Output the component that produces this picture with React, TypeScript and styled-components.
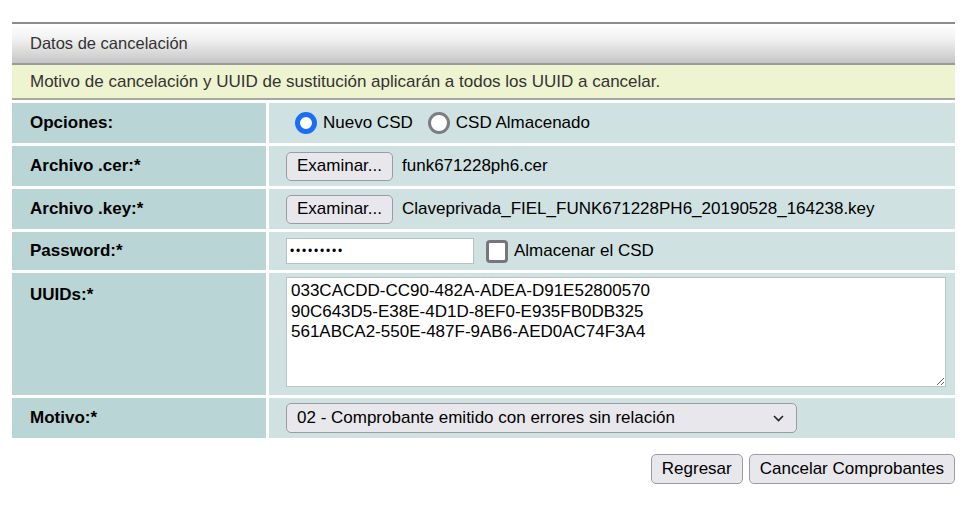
import React from "react";
import styled, { createGlobalStyle } from "styled-components";

const Global = createGlobalStyle`
  html, body { margin: 0; padding: 0; background: #fff; }
  body { font-family: "Liberation Sans", Arial, sans-serif; color: #000; }
`;

const Page = styled.div`
  width: 968px;
  height: 508px;
  padding: 22px 13px 0 12px;
  box-sizing: border-box;
`;

const Panel = styled.section`
  display: flex;
  flex-direction: column;
`;

const PanelHeader = styled.div`
  height: 39px;
  border-top: 2px solid #8c8c8c;
  border-bottom: 2px solid #9a9a9a;
  background: linear-gradient(#ffffff, #f0f0f0 40%, #c6c6c8);
  display: flex;
  align-items: center;
  padding-left: 18px;
  font-size: 16.5px;
  color: #333;
`;

const Notice = styled.div`
  height: 33px;
  background: #eef4cf;
  border-bottom: 2px solid #a6a6a6;
  display: flex;
  align-items: center;
  padding-left: 18px;
  font-size: 17px;
  color: #333;
`;

const FormGrid = styled.div`
  display: grid;
  grid-template-columns: 254px 1fr;
  gap: 3px;
  margin-top: 3px;
`;

const Label = styled.div<{ $h: number }>`
  background: #b9d5d5;
  height: ${(p) => p.$h}px;
  display: flex;
  align-items: ${(p) => (p.$h > 60 ? "flex-start" : "center")};
  padding: ${(p) => (p.$h > 60 ? "12px" : "0")} 0 0 18px;
  box-sizing: border-box;
  font-weight: bold;
  font-size: 17px;
`;

const Value = styled.div<{ $h: number }>`
  background: #d0e1e1;
  height: ${(p) => p.$h}px;
  display: flex;
  align-items: center;
  padding-left: 17px;
  box-sizing: border-box;
  font-size: 17px;
  gap: 9px;
`;

const RadioGroup = styled.label<{ $first?: boolean }>`
  display: flex;
  align-items: center;
  gap: 6px;
  margin-left: ${(p) => (p.$first ? "9px" : "6px")};
`;

const RadioDot = styled.span<{ $on?: boolean }>`
  width: 22px;
  height: 22px;
  border-radius: 50%;
  box-sizing: border-box;
  background: #fff;
  border: ${(p) => (p.$on ? "5.5px solid #1a6ef5" : "3px solid #7c7c84")};
`;

const FileButton = styled.button`
  font-family: "Liberation Sans", Arial, sans-serif;
  font-size: 17px;
  height: 29px;
  width: 107px;
  padding: 0;
  background: #e8e7ec;
  border: 1px solid #9b9ba3;
  border-radius: 5px;
  color: #000;
`;

const FileName = styled.span`
  font-size: 17px;
`;

const PasswordInput = styled.input`
  width: 188px;
  height: 26px;
  box-sizing: border-box;
  border: 1px solid #b5c2c2;
  background: #fff;
  font-size: 12px;
  padding: 0 3px;
  letter-spacing: 1.8px;
`;

const Check = styled.span`
  width: 22px;
  height: 23px;
  box-sizing: border-box;
  border: 3px solid #76767e;
  border-radius: 4px;
  background: #fff;
  margin-left: 3px;
  margin-right: -3px;
`;

const TextArea = styled.textarea`
  width: 660px;
  height: 110px;
  box-sizing: border-box;
  border: 1px solid #b8c4c4;
  background: #fff;
  font-family: "Liberation Sans", Arial, sans-serif;
  font-size: 17px;
  line-height: 20.5px;
  padding: 3px 4px;
  resize: both;
  color: #000;
`;

const UuidCell = styled(Value)`
  align-items: flex-start;
  padding-top: 4px;
`;

const SelectBox = styled.div`
  width: 511px;
  height: 30px;
  box-sizing: border-box;
  background: #e8e7ec;
  border: 1px solid #9b9ba3;
  border-radius: 5px;
  display: flex;
  align-items: center;
  justify-content: space-between;
  padding: 0 12px 0 10px;
  font-size: 17px;
`;

const Actions = styled.div`
  display: flex;
  justify-content: flex-end;
  gap: 6px;
  margin-top: 16px;
`;

const ActionButton = styled.button`
  font-family: "Liberation Sans", Arial, sans-serif;
  font-size: 17px;
  height: 30px;
  padding: 0 10px;
  background: #e8e7ec;
  border: 1px solid #9b9ba3;
  border-radius: 5px;
  color: #000;
`;

export default function App() {
  return (
    <Page>
      <Global />
      <Panel>
        <PanelHeader>Datos de cancelación</PanelHeader>
        <Notice>Motivo de cancelación y UUID de sustitución aplicarán a todos los UUID a cancelar.</Notice>
        <FormGrid>
          <Label $h={40}>Opciones:</Label>
          <Value $h={40}>
            <RadioGroup $first>
              <RadioDot $on />
              Nuevo CSD
            </RadioGroup>
            <RadioGroup>
              <RadioDot />
              CSD Almacenado
            </RadioGroup>
          </Value>

          <Label $h={40}>Archivo .cer:*</Label>
          <Value $h={40}>
            <FileButton>Examinar...</FileButton>
            <FileName>funk671228ph6.cer</FileName>
          </Value>

          <Label $h={40}>Archivo .key:*</Label>
          <Value $h={40}>
            <FileButton>Examinar...</FileButton>
            <FileName>Claveprivada_FIEL_FUNK671228PH6_20190528_164238.key</FileName>
          </Value>

          <Label $h={38}>Password:*</Label>
          <Value $h={38}>
            <PasswordInput type="password" defaultValue="123456789" />
            <Check />
            <FileName>Almacenar el CSD</FileName>
          </Value>

          <Label $h={122}>UUIDs:*</Label>
          <UuidCell $h={122}>
            <TextArea
              defaultValue={"033CACDD-CC90-482A-ADEA-D91E52800570\n90C643D5-E38E-4D1D-8EF0-E935FB0DB325\n561ABCA2-550E-487F-9AB6-AED0AC74F3A4"}
            />
          </UuidCell>

          <Label $h={40}>Motivo:*</Label>
          <Value $h={40}>
            <SelectBox>
              <span>02 - Comprobante emitido con errores sin relación</span>
              <svg width="11" height="7" viewBox="0 0 11 7">
                <path d="M1 1l4.5 4.5L10 1" fill="none" stroke="#222" strokeWidth="1.6" />
              </svg>
            </SelectBox>
          </Value>
        </FormGrid>
        <Actions>
          <ActionButton>Regresar</ActionButton>
          <ActionButton>Cancelar Comprobantes</ActionButton>
        </Actions>
      </Panel>
    </Page>
  );
}
